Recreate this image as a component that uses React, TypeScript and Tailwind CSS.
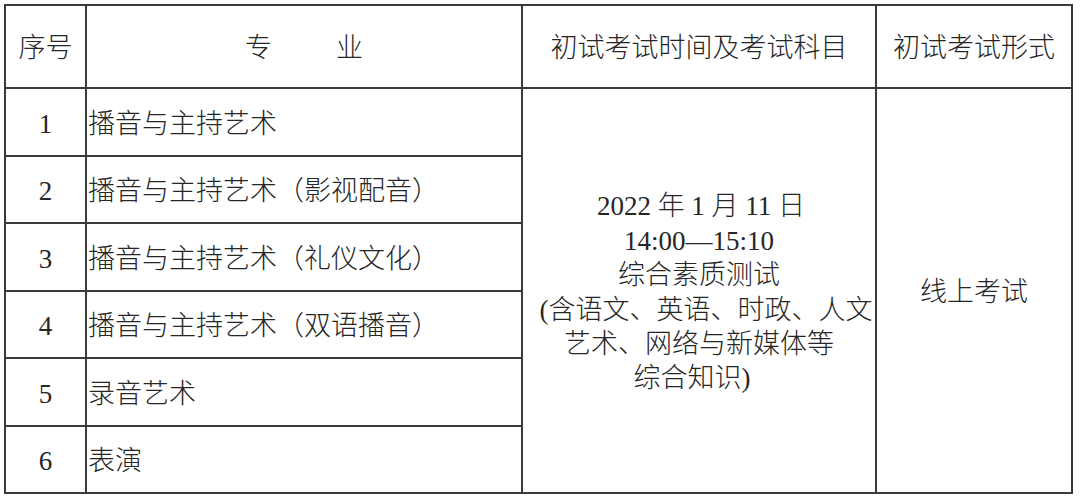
import React from "react";

const rows = [
  "播音与主持艺术",
  "播音与主持艺术（影视配音）",
  "播音与主持艺术（礼仪文化）",
  "播音与主持艺术（双语播音）",
  "录音艺术",
  "表演",
];

export default function App() {
  return (
    <div className="w-[1080px] h-[499px] bg-white pt-[4px] pl-[4px] text-[#262626] font-['Liberation_Serif','Noto_Sans_CJK_SC',serif] font-light text-[27px]">
      <div className="grid grid-cols-[81px_436px_354px_196px] grid-rows-[83px_repeat(6,67.5px)] w-[1069px] border-l-2 border-t-2 border-[#3a3a3a]">
        <div className="flex items-center justify-center pt-[3px] border-r-2 border-b-2 border-[#3a3a3a]">序号</div>
        <div className="flex items-center justify-center gap-[64px] pt-[3px] border-r-2 border-b-2 border-[#3a3a3a]">
          <span>专</span>
          <span>业</span>
        </div>
        <div className="flex items-center justify-center pt-[3px] border-r-2 border-b-2 border-[#3a3a3a]">初试考试时间及考试科目</div>
        <div className="flex items-center justify-center pt-[3px] border-r-2 border-b-2 border-[#3a3a3a]">初试考试形式</div>

        {rows.map((name, i) => (
          <React.Fragment key={i}>
            <div
              className="flex items-center justify-center pt-[4px] border-r-2 border-b-2 border-[#3a3a3a]"
              style={{ gridColumn: 1, gridRow: i + 2 }}
            >
              {i + 1}
            </div>
            <div
              className="flex items-center pl-[1px] pt-[4px] border-r-2 border-b-2 border-[#3a3a3a] whitespace-nowrap"
              style={{ gridColumn: 2, gridRow: i + 2 }}
            >
              {name}
            </div>
          </React.Fragment>
        ))}

        <div className="col-start-3 row-start-2 row-span-6 flex flex-col items-center justify-center pt-[4px] leading-[34.4px] border-r-2 border-b-2 border-[#3a3a3a] whitespace-nowrap">
          <div className="pl-[4px]">2022 年 1 月 11 日</div>
          <div>14:00—15:10</div>
          <div>综合素质测试</div>
          <div className="pl-[14px]">(含语文、英语、时政、人文</div>
          <div>艺术、网络与新媒体等</div>
          <div className="pr-[14px]">综合知识)</div>
        </div>
        <div className="col-start-4 row-start-2 row-span-6 flex items-center justify-center pt-[3px] border-r-2 border-b-2 border-[#3a3a3a]">
          线上考试
        </div>
      </div>
    </div>
  );
}
